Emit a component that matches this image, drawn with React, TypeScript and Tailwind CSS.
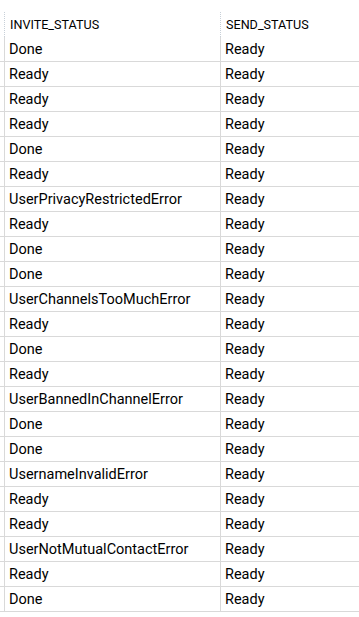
import React from 'react';

type Row = { invite: string; send: string };

const rows: Row[] = [
  { invite: 'Done', send: 'Ready' },
  { invite: 'Ready', send: 'Ready' },
  { invite: 'Ready', send: 'Ready' },
  { invite: 'Ready', send: 'Ready' },
  { invite: 'Done', send: 'Ready' },
  { invite: 'Ready', send: 'Ready' },
  { invite: 'UserPrivacyRestrictedError', send: 'Ready' },
  { invite: 'Ready', send: 'Ready' },
  { invite: 'Done', send: 'Ready' },
  { invite: 'Done', send: 'Ready' },
  { invite: 'UserChannelsTooMuchError', send: 'Ready' },
  { invite: 'Ready', send: 'Ready' },
  { invite: 'Done', send: 'Ready' },
  { invite: 'Ready', send: 'Ready' },
  { invite: 'UserBannedInChannelError', send: 'Ready' },
  { invite: 'Done', send: 'Ready' },
  { invite: 'Done', send: 'Ready' },
  { invite: 'UsernameInvalidError', send: 'Ready' },
  { invite: 'Ready', send: 'Ready' },
  { invite: 'Ready', send: 'Ready' },
  { invite: 'UserNotMutualContactError', send: 'Ready' },
  { invite: 'Ready', send: 'Ready' },
  { invite: 'Done', send: 'Ready' },
];

export default function App() {
  return (
    <div
      className="w-[359px] h-[617px] overflow-hidden bg-white pt-[12px] text-black"
      style={{ fontFamily: 'Roboto, "Noto Sans", sans-serif' }}
    >
      {/* column headers */}
      <div className="flex h-[25px] text-[12.6px] leading-none">
        <div className="w-[4px] shrink-0" />
        <div className="w-[216px] shrink-0 flex items-center pl-[5px] pt-[2px] border-l border-dotted border-[#c8d0d8]">
          INVITE_STATUS
        </div>
        <div className="flex-1 flex items-center pl-[5px] pt-[2px] border-l border-dotted border-[#c8d0d8]">
          SEND_STATUS
        </div>
      </div>

      {rows.map((r, i) => (
        <div key={i} className="flex h-[25px] border-b border-[#d9d9d9] text-[14.5px] leading-none">
          <div className="w-[4px] shrink-0" />
          <div className="w-[216px] shrink-0 flex items-center pl-[4px] pt-[3px] border-l border-[#d9d9d9]">
            {r.invite}
          </div>
          <div className="flex-1 flex items-center pl-[4px] pt-[3px] border-l border-[#d9d9d9]">{r.send}</div>
        </div>
      ))}
    </div>
  );
}
